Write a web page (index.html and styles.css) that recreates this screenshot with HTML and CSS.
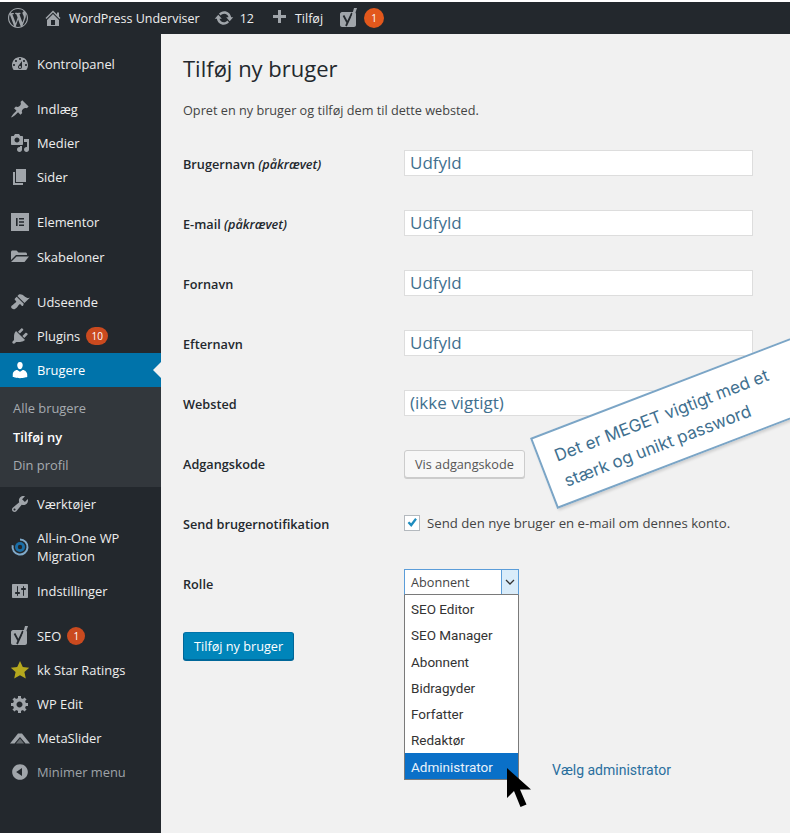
FILE: index.html
```html
<!DOCTYPE html>
<html lang="da">
<head>
    <meta charset="UTF-8">
    <title>Tilføj ny bruger</title>
    <link rel="stylesheet" href="styles.css">
</head>
<body>
    <svg class="sprite" aria-hidden="true">
        <symbol id="i-wp" viewBox="0 0 20 20"><path d="M20 10c0-5.51-4.49-10-10-10C4.48 0 0 4.49 0 10c0 5.52 4.48 10 10 10 5.51 0 10-4.48 10-10zM7.78 15.37L4.37 6.22c.55-.02 1.17-.08 1.17-.08.5-.06.44-1.13-.06-1.11 0 0-1.45.11-2.37.11-.18 0-.37 0-.58-.01C4.12 2.69 6.87 1.11 10 1.11c2.33 0 4.45.87 6.05 2.34-.68-.11-1.65.39-1.65 1.58 0 .74.45 1.36.9 2.1.35.61.55 1.36.55 2.46 0 1.49-1.4 5-1.4 5l-3.03-8.37c.54-.02.82-.17.82-.17.5-.05.44-1.25-.06-1.22 0 0-1.44.12-2.38.12-.87 0-2.33-.12-2.33-.12-.5-.03-.56 1.2-.06 1.22l.92.08 1.26 3.41zM17.41 10c.24-.64.74-1.87.43-4.25.7 1.29 1.05 2.71 1.05 4.25 0 3.29-1.73 6.24-4.4 7.78.97-2.59 1.94-5.2 2.92-7.78zM6.1 18.09C3.12 16.65 1.11 13.53 1.11 10c0-1.3.23-2.48.72-3.59C3.25 10.3 4.67 14.2 6.1 18.09zm4.03-6.63l2.58 6.98c-.86.29-1.76.45-2.71.45-.79 0-1.57-.11-2.29-.33.81-2.38 1.62-4.74 2.42-7.1z"/></symbol>
        <symbol id="i-home" viewBox="0 0 20 20"><path d="M16 8.5l1.53 1.53-1.06 1.06L10 4.62l-6.47 6.47-1.06-1.06L10 2.5l4 4v-2h2v4zm-6-2.46l6 5.99V18H4v-5.97zM12 17v-5H8v5h4z"/></symbol>
        <symbol id="i-update" viewBox="0 0 20 20"><path d="M10.2 3.28c3.53 0 6.43 2.61 6.92 6h2.08l-3.5 4-3.5-4h2.32c-.45-1.97-2.21-3.45-4.32-3.45-1.45 0-2.73.71-3.54 1.78L4.95 5.66C6.23 4.2 8.11 3.28 10.2 3.28zm-.4 13.44c-3.52 0-6.43-2.61-6.92-6H.8l3.5-4c1.17 1.33 2.33 2.67 3.5 4H5.48c.45 1.97 2.21 3.45 4.32 3.45 1.45 0 2.73-.71 3.54-1.78l1.71 1.95c-1.28 1.46-3.15 2.38-5.25 2.38z"/></symbol>
        <symbol id="i-plus" viewBox="0 0 20 20"><path d="M17 7v3h-5v5H9v-5H4V7h5V2h3v5h5z"/></symbol>
        <symbol id="i-yoast" viewBox="0 0 20 20"><path d="M3 4h12c1 0 2 1 2 2v11c0 1-1 2-2 2H3c-1 0-2-1-2-2V6c0-1 1-2 2-2z"/><path d="M4.500 7.500l4 7.500M13 5L7 18" fill="none" stroke="#23282d" stroke-width="1.800"/><path d="M15 0h3l-3 9h-2.500z"/></symbol>
        <symbol id="i-dashboard" viewBox="0 0 20 20"><path d="M3.76 16h12.48c1.1-1.37 1.76-3.11 1.76-5 0-4.42-3.58-8-8-8s-8 3.58-8 8c0 1.89.66 3.63 1.76 5zM10 4c.55 0 1 .45 1 1s-.45 1-1 1-1-.45-1-1 .45-1 1-1zM6 6c.55 0 1 .45 1 1s-.45 1-1 1-1-.45-1-1 .45-1 1-1zm8 0c.55 0 1 .45 1 1s-.45 1-1 1-1-.45-1-1 .45-1 1-1zm-5.37 5.55L12 7v6c0 1.1-.9 2-2 2s-2-.9-2-2c0-.57.24-1.08.63-1.45zM4 10c.55 0 1 .45 1 1s-.45 1-1 1-1-.45-1-1 .45-1 1-1zm12 0c.55 0 1 .45 1 1s-.45 1-1 1-1-.45-1-1 .45-1 1-1zm-5 3c0-.55-.45-1-1-1s-1 .45-1 1 .45 1 1 1 1-.45 1-1z"/></symbol>
        <symbol id="i-pin" viewBox="0 0 20 20"><path d="M10.44 3.02l1.82-1.82 6.36 6.35-1.83 1.82c-1.05-.68-2.48-.57-3.41.36l-.75.75c-.92.93-1.04 2.35-.35 3.41l-1.83 1.82-2.41-2.41-2.8 2.79c-.42.42-3.38 2.71-3.8 2.29s1.86-3.39 2.28-3.81l2.79-2.79L4.1 9.36l1.83-1.82c1.05.69 2.48.57 3.4-.36l.75-.75c.93-.92 1.05-2.35.36-3.41z"/></symbol>
        <symbol id="i-media" viewBox="0 0 20 20"><path d="M13 11V4c0-.55-.45-1-1-1h-1.67L9 1H5L3.67 3H2c-.55 0-1 .45-1 1v7c0 .55.45 1 1 1h10c.55 0 1-.45 1-1zM7 4.5c1.38 0 2.5 1.12 2.5 2.5S8.38 9.5 7 9.5 4.5 8.38 4.5 7 5.62 4.5 7 4.5zM14 6h5v10.5c0 1.38-1.12 2.5-2.5 2.5S14 17.88 14 16.5s1.12-2.5 2.5-2.5c.17 0 .34.02.5.05V9h-3V6zm-4 8.05V13h2v3.5c0 1.38-1.12 2.5-2.5 2.5S7 17.88 7 16.5 8.12 14 9.5 14c.17 0 .34.02.5.05z"/></symbol>
        <symbol id="i-page" viewBox="0 0 20 20"><path d="M6 15V2h10v13H6zm-1 1h8v2H3V5h2v11z"/></symbol>
        <symbol id="i-elementor" viewBox="0 0 20 20"><path d="M1 1h18v18H1zM6 6v8h1.600V6zm3 0v1.600h5V6zm0 3.200v1.600h5V9.200zm0 3.200V14h5v-1.600z" fill-rule="evenodd"/></symbol>
        <symbol id="i-folder" viewBox="0 0 20 20"><path d="M1 5c0-.8.7-1.500 1.500-1.500h4L8.500 5.500h7c.8 0 1.500.7 1.500 1.500v1H6l-5 5zM6.500 9.500H19L14.500 15H1z"/></symbol>
        <symbol id="i-brush" viewBox="0 0 20 20"><path d="M14.48 11.06L7.41 3.99l1.5-1.5c.5-.56 2.3-.47 3.51.32 1.21.8 1.43 1.28 2.91 2.1 1.18.64 2.45 1.26 4.45.85zm-.71.71L6.7 4.7 4.93 6.47c-.39.39-.39 1.02 0 1.41l1.06 1.06c.39.39.39 1.03 0 1.42-.6.6-1.43 1.11-2.21 1.69-.35.26-.7.53-1.01.84C1.43 13.23.4 14.96 2 16.56s3.33.57 4.67-.78c.3-.31.58-.65.84-1 .58-.78 1.08-1.61 1.68-2.21.39-.39 1.03-.39 1.42 0l1.06 1.06c.39.39 1.02.39 1.41 0z"/></symbol>
        <symbol id="i-plugin" viewBox="0 0 20 20"><path d="M13.11 4.36L9.87 7.6 8 5.73l3.24-3.24c.35-.34 1.05-.2 1.56.32.52.51.66 1.21.31 1.55zm-8 1.77l.91-1.12 9.01 9.01-1.19.84c-.71.71-2.63 1.16-3.82 1.16H6.14L4.9 17.26c-.59.59-1.54.59-2.12 0-.59-.58-.59-1.53 0-2.12l1.24-1.24v-3.88c0-1.13.4-3.19 1.09-3.89zm7.26 3.97l3.24-3.24c.34-.35 1.04-.21 1.55.31.52.51.66 1.21.31 1.55l-3.24 3.25z"/></symbol>
        <symbol id="i-users" viewBox="0 0 20 20"><path d="M10 9.250c-2.270 0-2.730-3.440-2.730-3.440C7 4.020 7.820 2 9.970 2c2.160 0 2.980 2.020 2.710 3.810 0 0-.41 3.440-2.680 3.440zm0 2.570L12.720 10c2.390 0 4.520 2.330 4.520 4.530v2.490s-3.650 1.130-7.240 1.130c-3.650 0-7.240-1.130-7.240-1.130v-2.490c0-2.250 1.940-4.480 4.470-4.480z"/></symbol>
        <symbol id="i-tools" viewBox="0 0 20 20"><path d="M16.68 9.770c-1.340 1.340-3.300 1.670-4.950.99l-5.410 6.520c-.99.99-2.590.99-3.580 0s-.99-2.590 0-3.570l6.520-5.420c-.68-1.650-.35-3.610.99-4.950 1.280-1.280 3.120-1.620 4.720-1.060l-2.890 2.890 2.820 2.820 2.860-2.870c.53 1.580.18 3.390-1.080 4.650zM3.810 16.210c.4.39 1.040.39 1.430 0 .4-.4.4-1.040 0-1.430-.39-.4-1.030-.4-1.430 0-.39.39-.39 1.030 0 1.430z"/></symbol>
        <symbol id="i-settings" viewBox="0 0 20 20"><path d="M18 16V4c0-.55-.45-1-1-1H3c-.55 0-1 .45-1 1v12c0 .55.45 1 1 1h14c.55 0 1-.45 1-1zM8 11h1c.55 0 1 .45 1 1s-.45 1-1 1H8v1.500c0 .28-.22.5-.5.5s-.5-.22-.5-.5V13H6c-.55 0-1-.45-1-1s.45-1 1-1h1V5.500c0-.28.22-.5.5-.5s.5.22.5.5V11zm5-2h-1c-.55 0-1-.45-1-1s.45-1 1-1h1V5.500c0-.28.22-.5.5-.5s.5.22.5.5V7h1c.55 0 1 .45 1 1s-.45 1-1 1h-1v5.500c0 .28-.22.5-.5.5s-.5-.22-.5-.5V9z"/></symbol>
        <symbol id="i-gear" viewBox="0 0 20 20"><path d="M18 12h-2.180c-.17.7-.44 1.350-.81 1.930l1.540 1.540-2.100 2.100-1.540-1.540c-.58.36-1.230.63-1.910.79V19H8v-2.180c-.68-.16-1.330-.43-1.910-.79l-1.540 1.540-2.120-2.120 1.540-1.540c-.36-.58-.63-1.230-.79-1.910H1V9.030h2.170c.16-.7.44-1.350.8-1.940L2.430 5.550l2.100-2.100 1.540 1.540c.58-.37 1.240-.64 1.930-.81V2h3v2.180c.68.16 1.330.43 1.910.79l1.540-1.540 2.120 2.120-1.540 1.540c.36.59.64 1.240.8 1.940H18V12zm-8.500 1.500c1.660 0 3-1.340 3-3s-1.340-3-3-3-3 1.340-3 3 1.340 3 3 3z"/></symbol>
        <symbol id="i-slider" viewBox="0 0 20 20"><path d="M0 15.500L8 5.500h4l8 10h-4.500L10 9l-5.500 6.500z"/><path d="M6 15.500L10 10.500l4 5z" opacity=".55"/></symbol>
        <symbol id="i-collapse" viewBox="0 0 20 20"><path d="M10 2.160c4.330 0 7.840 3.510 7.840 7.840s-3.510 7.840-7.840 7.840S2.160 14.330 2.160 10 5.710 2.160 10 2.160zm2 11.720V6.120L6.180 9.970z"/></symbol>
    </svg>

    <header class="topbar">
        <svg class="bar-icon bar-wp"><use href="#i-wp"/></svg>
        <svg class="bar-icon bar-home"><use href="#i-home"/></svg>
        <span class="bar-text">WordPress Underviser</span>
        <svg class="bar-icon bar-update"><use href="#i-update"/></svg>
        <span class="bar-text">12</span>
        <svg class="bar-icon bar-plus"><use href="#i-plus"/></svg>
        <span class="bar-text">Tilføj</span>
        <svg class="bar-icon bar-yoast"><use href="#i-yoast"/></svg>
        <span class="badge badge-top">1</span>
    </header>

    <div class="wrap">
        <nav class="sidebar">
            <a class="item"><svg class="icon"><use href="#i-dashboard"/></svg>Kontrolpanel</a>
            <div class="sep"></div>
            <a class="item"><svg class="icon"><use href="#i-pin"/></svg>Indlæg</a>
            <a class="item"><svg class="icon"><use href="#i-media"/></svg>Medier</a>
            <a class="item"><svg class="icon"><use href="#i-page"/></svg>Sider</a>
            <div class="sep"></div>
            <a class="item"><svg class="icon"><use href="#i-elementor"/></svg>Elementor</a>
            <a class="item item-gap"><svg class="icon"><use href="#i-folder"/></svg>Skabeloner</a>
            <div class="sep"></div>
            <a class="item"><svg class="icon"><use href="#i-brush"/></svg>Udseende</a>
            <a class="item"><svg class="icon"><use href="#i-plugin"/></svg>Plugins<span class="badge badge-wide">10</span></a>
            <a class="item current"><svg class="icon"><use href="#i-users"/></svg>Brugere</a>
            <div class="submenu">
                <a>Alle brugere</a>
                <a class="sub-current">Tilføj ny</a>
                <a>Din profil</a>
            </div>
            <a class="item"><svg class="icon"><use href="#i-tools"/></svg>Værktøjer</a>
            <a class="item item-tall">
                <svg class="icon" viewBox="0 0 20 20"><path d="M10 2.500a7.500 7.500 0 1 1-7.300 5.800" fill="none" stroke="#7fa9c9" stroke-width="2"/><circle cx="10" cy="10" r="5" fill="#1b6fa8"/><circle cx="10" cy="10" r="2.200" fill="#23282d"/></svg>
                <span>All-in-One WP Migration</span>
            </a>
            <a class="item"><svg class="icon"><use href="#i-settings"/></svg>Indstillinger</a>
            <div class="sep"></div>
            <a class="item"><svg class="icon"><use href="#i-yoast"/></svg>SEO<span class="badge">1</span></a>
            <a class="item"><svg class="icon icon-star" viewBox="0 0 20 20"><path d="M10 1l2.800 6 6.400.7-4.800 4.300 1.400 6.500L10 15.200l-5.800 3.300L5.600 12 .8 7.700 7.200 7z"/></svg>kk Star Ratings</a>
            <a class="item"><svg class="icon"><use href="#i-gear"/></svg>WP Edit</a>
            <a class="item"><svg class="icon"><use href="#i-slider"/></svg>MetaSlider</a>
            <a class="item item-muted"><svg class="icon"><use href="#i-collapse"/></svg>Minimer menu</a>
        </nav>

        <main class="main">
            <h1>Tilføj ny bruger</h1>
            <p class="intro">Opret en ny bruger og tilføj dem til dette websted.</p>

            <form class="form">
                <label class="row-label">Brugernavn <em>(påkrævet)</em></label>
                <input class="field" type="text" value="Udfyld">
                <label class="row-label">E-mail <em>(påkrævet)</em></label>
                <input class="field" type="text" value="Udfyld">
                <label class="row-label">Fornavn</label>
                <input class="field" type="text" value="Udfyld">
                <label class="row-label">Efternavn</label>
                <input class="field" type="text" value="Udfyld">
                <label class="row-label">Websted</label>
                <input class="field" type="text" value="(ikke vigtigt)">
                <label class="row-label">Adgangskode</label>
                <div><button class="btn" type="button">Vis adgangskode</button></div>
                <label class="row-label">Send brugernotifikation</label>
                <div class="notify">
                    <span class="check"><svg viewBox="0 0 16 16"><path d="M3 8l1.800-1.800L7 8.400l4.600-6L13.600 4 7.200 12.600z"/></svg></span>
                    Send den nye bruger en e-mail om dennes konto.
                </div>
                <label class="row-label">Rolle</label>
                <div class="select-wrap">
                    <div class="select">
                        <span>Abonnent</span>
                        <span class="select-arrow"><svg viewBox="0 0 10 6"><path d="M1 1l4 4 4-4" fill="none" stroke="#333" stroke-width="1.300"/></svg></span>
                    </div>
                    <ul class="options">
                        <li>SEO Editor</li>
                        <li>SEO Manager</li>
                        <li>Abonnent</li>
                        <li>Bidragyder</li>
                        <li>Forfatter</li>
                        <li>Redaktør</li>
                        <li class="selected">Administrator</li>
                    </ul>
                    <svg class="cursor" viewBox="0 0 25 41"><path d="M0 0v30l7-7 6.500 16 6-2.500L13 21.500h11z"/></svg>
                    <span class="hint">Vælg administrator</span>
                </div>
            </form>

            <button class="btn btn-primary" type="button">Tilføj ny bruger</button>

            <div class="note">
                Det er MEGET vigtigt med et<br>stærk og unikt password
            </div>
        </main>
    </div>
</body>
</html>
```

FILE: styles.css
```css
* {
    box-sizing: border-box;
}
html, body {
    height: 100%;
}
body {
    margin: 0;
    overflow: hidden;
    display: flex;
    flex-direction: column;
    padding-top: 2px;
    background-color: #fff;
    font-family: "Open Sans", "Noto Sans", sans-serif;
    font-size: 12.7px;
    color: #444;
}
.sprite {
    position: absolute;
    width: 0;
    height: 0;
}

/* Admin bar */
.topbar {
    display: flex;
    align-items: center;
    flex: 0 0 32px;
    padding-left: 8px;
    background-color: #23282d;
    font-size: 12.5px;
    color: #eee;
}
.bar-icon {
    width: 20px;
    height: 20px;
    fill: #a0a5aa;
}
.bar-wp {
    margin-right: 15px;
}
.bar-home {
    margin-right: 6px;
}
.bar-update {
    margin: 0 6px 0 14px;
}
.bar-plus {
    margin: 0 6px 0 15px;
}
.bar-yoast {
    margin: 0 5px 0 16px;
}
.badge {
    display: inline-block;
    width: 18px;
    height: 18px;
    margin-left: 6px;
    border-radius: 9px;
    background-color: #ca4a1f;
    color: #fff;
    font-size: 10px;
    line-height: 18px;
    text-align: center;
}
.badge-wide {
    width: 22px;
}
.badge-top {
    width: 20px;
    height: 20px;
    margin-left: 0;
    border-radius: 10px;
    background-color: #e2581c;
    line-height: 20px;
}

.wrap {
    display: flex;
    flex: 1;
    min-height: 0;
}

/* Left menu */
.sidebar {
    flex: 0 0 161px;
    padding-top: 13px;
    background-color: #23282d;
    font-size: 12.9px;
    color: #eee;
}
.item {
    position: relative;
    display: flex;
    align-items: center;
    height: 34px;
}
.item-gap {
    height: 35px;
}
.item-tall {
    height: 53px;
    padding-bottom: 2px;
    line-height: 18px;
}
.item-tall span {
    width: 110px;
}
.item-muted {
    color: #9ea3a8;
}
.icon {
    flex: none;
    width: 20px;
    height: 20px;
    margin: 0 7px 0 10px;
    fill: #a0a5aa;
}
.icon-star {
    fill: #b5a81e;
}
.sep {
    height: 11px;
}
.current {
    background-color: #0073aa;
    color: #fff;
}
.current .icon {
    fill: #fff;
}
.current::after {
    content: "";
    position: absolute;
    right: 0;
    top: 9px;
    border: 8px solid transparent;
    border-right-color: #f1f1f1;
    border-left-width: 0;
}
.submenu {
    display: flex;
    flex-direction: column;
    height: 100px;
    padding: 7px 0 0 13px;
    background-color: #32373c;
    color: #a6abb0;
}
.submenu a {
    height: 28.500px;
    line-height: 28px;
}
.sub-current {
    color: #fff;
    font-weight: 600;
}

/* Main content */
.main {
    position: relative;
    flex: 1;
    overflow: hidden;
    padding: 15px 0 0 22px;
    background-color: #f1f1f1;
}
h1 {
    margin: 0;
    font-size: 22px;
    font-weight: 400;
    line-height: 38px;
    color: #23282d;
}
.intro {
    margin: 13px 0 0;
    line-height: 20px;
}
.form {
    display: grid;
    grid-template-columns: 221px 349px;
    grid-auto-rows: 60px;
    align-items: start;
    margin-top: 30px;
}
.row-label {
    line-height: 29px;
    font-weight: 600;
    color: #23282d;
}
.row-label em {
    font-weight: 600;
}
.field {
    width: 100%;
    height: 26px;
    padding: 0 5px 2px;
    border: 1px solid #ddd;
    background-color: #fff;
    font-family: inherit;
    font-size: 17px;
    color: #41708f;
}
.btn {
    height: 28px;
    padding: 0 10px;
    border: 1px solid #ccc;
    border-radius: 3px;
    background-color: #f7f7f7;
    box-shadow: 0 1px 0 #ccc;
    font-family: inherit;
    font-size: 12.700px;
    color: #555;
}
.btn-primary {
    display: block;
    margin-top: 2px;
    border-color: #0073aa #006799 #006799;
    background-color: #0085ba;
    box-shadow: 0 1px 0 #006799;
    color: #fff;
}
.notify {
    display: flex;
    align-items: center;
    gap: 7px;
    height: 26px;
    font-size: 13.200px;
}
.check {
    width: 16px;
    height: 16px;
    border: 1px solid #b4b9be;
    background-color: #fff;
}
.check svg {
    display: block;
    width: 14px;
    height: 14px;
    fill: #1e8cbe;
}

/* Role select with its open list */
.select-wrap {
    position: relative;
    width: 115px;
    margin-top: -1px;
}
.select {
    display: flex;
    align-items: center;
    justify-content: space-between;
    height: 26px;
    padding-left: 6px;
    border: 1px solid #5b9dd9;
    border-bottom-color: #7a7a7a;
    background-color: #fff;
    color: #444;
}
.select-arrow {
    display: flex;
    align-items: center;
    justify-content: center;
    width: 17px;
    height: 24px;
    border-left: 1px solid #5b9dd9;
    background-color: #d9ecfa;
}
.select-arrow svg {
    width: 10px;
    height: 6px;
}
.options {
    position: absolute;
    left: 0;
    top: 26px;
    width: 115px;
    height: 185px;
    margin: 0;
    padding: 0;
    border: 1px solid #7a7a7a;
    border-top: 0;
    background-color: #fff;
    list-style: none;
    font-family: Roboto, sans-serif;
    font-size: 13.500px;
    color: #333;
}
.options li {
    height: 26.300px;
    padding-left: 6px;
    line-height: 28px;
}
.options .selected {
    background-color: #0a70c8;
    color: #e8f2fb;
}
.cursor {
    position: absolute;
    left: 103px;
    top: 199px;
    width: 25px;
    height: 41px;
    fill: #000;
}
.hint {
    position: absolute;
    left: 148px;
    top: 193px;
    white-space: nowrap;
    font-family: Roboto, sans-serif;
    font-size: 14px;
    color: #2a6f9e;
}

/* Rotated note over the form */
.note {
    position: absolute;
    left: 369px;
    top: 404px;
    width: 330px;
    height: 76px;
    padding: 11px 0 0 15px;
    border: 2px solid #7ba5c6;
    background-color: #fff;
    box-shadow: 1px 2px 3px rgba(0, 0, 0, 0.15);
    font-family: Inter, sans-serif;
    font-size: 17px;
    line-height: 27px;
    color: #41708f;
    transform: rotate(-21deg);
    transform-origin: 0 0;
}
```
